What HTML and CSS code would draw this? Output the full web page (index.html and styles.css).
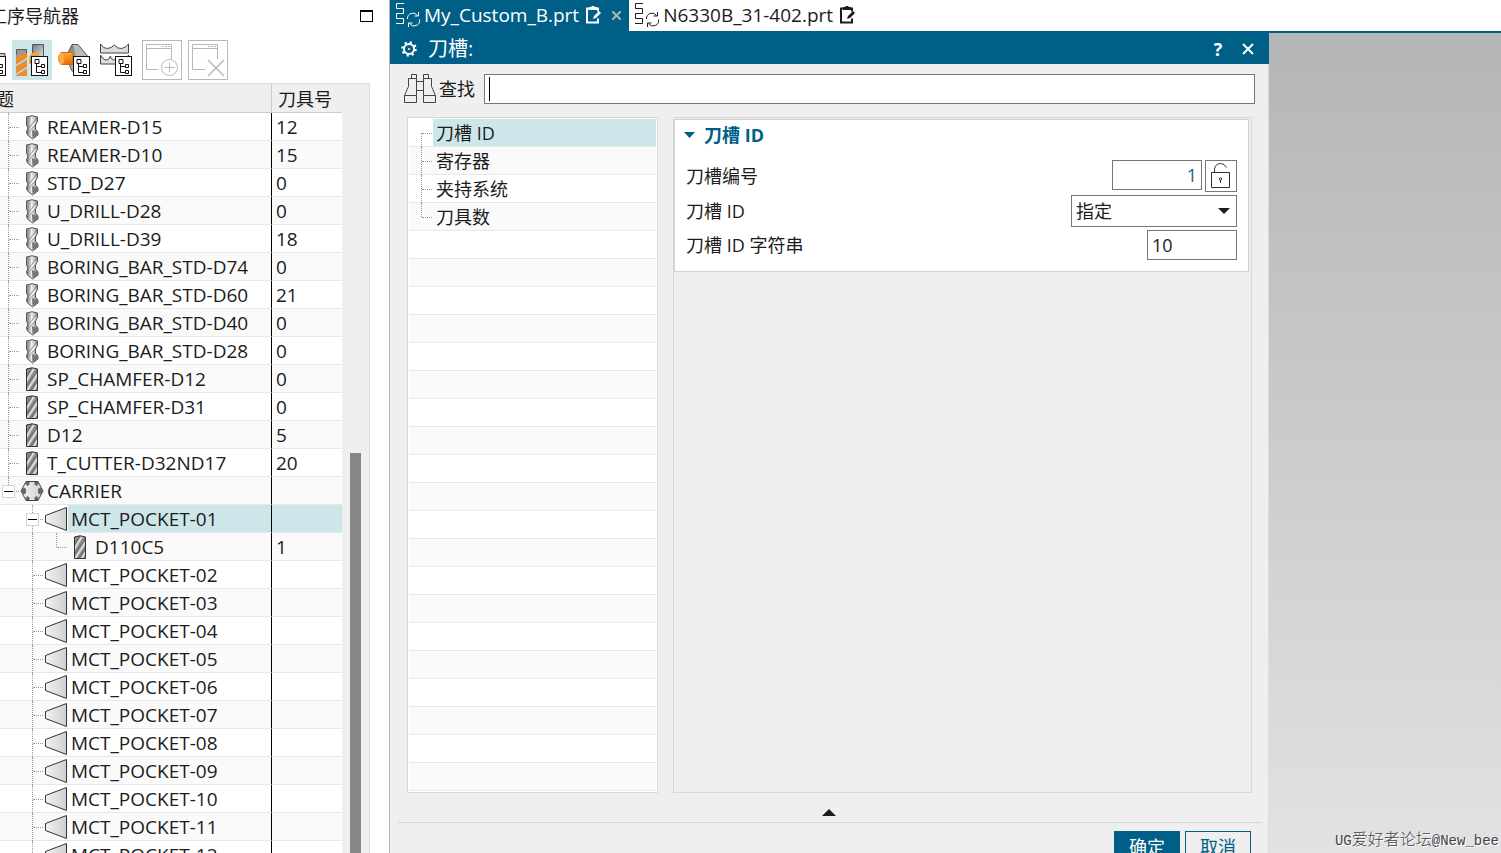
FILE: index.html
```html
<!DOCTYPE html>
<html lang="zh-CN">
<head>
<meta charset="utf-8">
<title>工序导航器</title>
<link rel="stylesheet" href="styles.css">
</head>
<body>
<svg class="defs" aria-hidden="true">
  <defs>
    <linearGradient id="metal" x1="0" x2="1"><stop offset="0" stop-color="#777"/><stop offset=".45" stop-color="#eee"/><stop offset="1" stop-color="#888"/></linearGradient>
    <linearGradient id="pale" x1="0" x2="1"><stop offset="0" stop-color="#f2f2f2"/><stop offset="1" stop-color="#cfcfcf"/></linearGradient>
    <linearGradient id="steel" x1="0" x2="1" y2="1"><stop offset="0" stop-color="#777"/><stop offset="1" stop-color="#ddd"/></linearGradient>
    <linearGradient id="orange" y2="1" x2="0"><stop offset="0" stop-color="#ffa838"/><stop offset="1" stop-color="#e06a00"/></linearGradient>
    <clipPath id="millclip"><rect x="7" y="3" width="10" height="22"/></clipPath>
    <clipPath id="toolclip"><rect x="4" y="10" width="11" height="26"/></clipPath>
  </defs>
  <symbol id="drill" viewBox="0 0 24 28">
    <path d="M6.500 4 Q12 1.500 17.500 4 V8 L15.500 12 V16 L18 19 V22 L12.500 26 L7.500 22 L6.500 19 L8 15 L6.500 12 Z" fill="url(#metal)" stroke="#555"/>
    <path d="M17 5 C15 10 9 12 7.500 20 C11 16 15 14 17 8 Z" fill="#f4f4f4" stroke="#666" stroke-width=".8"/>
    <path d="M12 17 l5.500 2 v3 l-5 3.500 z" fill="#777"/>
    <path d="M7 5 h3 l-2 8 z" fill="#999"/>
  </symbol>
  <symbol id="mill" viewBox="0 0 24 28">
    <g clip-path="url(#millclip)"><rect x="6" y="2" width="12" height="24" fill="#8c8c8c"/>
    <path d="M5 18 L15 2 M6 27 L19 7 M12 28 L19 17" stroke="#dedede" stroke-width="2"/><path d="M4 16 L13 1 M5 24 L19 3 M9 28 L19 13" stroke="#666" stroke-width="1"/></g>
    <path d="M6.500 4 Q12 1.500 17.500 4 V25.500 H6.500 Z" fill="none" stroke="#333"/>
  </symbol>
  <symbol id="carrier" viewBox="0 0 24 28">
    <path d="M6 4.500 H18 L23 14 L18 23.500 H6 L1 14 Z" fill="url(#pale)" stroke="#444"/>
    <g fill="#666"><path d="M5.500 5h4v2.500l-2 1.500-2-2zM14.500 5h4v2l-2 2-2-1.500zM2 12.500l2-2 2 1.500v4l-2 1.500-2-2zM22 12.500l-2-2-2 1.500v4l2 1.500 2-2zM5.500 23h4v-2.500l-2-1.500-2 2zM14.500 23h4v-2l-2-2-2 1.500z"/></g>
  </symbol>
  <symbol id="pocket" viewBox="0 0 24 28">
    <path d="M1.500 10.500 L22.500 2.500 V25.500 L1.500 17.500 Z" fill="url(#pale)" stroke="#333"/>
  </symbol>
  <symbol id="badge" viewBox="0 0 18 20">
    <rect x=".5" y=".5" width="16" height="19" fill="#fff" stroke="#111"/>
    <path d="M4 3.500h4v4H4zM10.500 8.500h3v3h-3zM10.500 14.500h3v3h-3zM5.500 8v8.500h5M5.500 10.500h5" fill="none" stroke="#111"/>
  </symbol>
  <symbol id="part" viewBox="0 0 26 26">
    <path d="M9 1.500H1.500v5h7v5h-7v5h7v5H1" fill="none" stroke="currentColor"/>
    <path d="M12.500 17a5.500 5.500 0 0 1 10-3.500M24.500 17.500a5.500 5.500 0 0 1-10 4M23.500 10v4h-4M13.500 25v-4h4" fill="none" stroke="currentColor"/>
  </symbol>
  <symbol id="clip" viewBox="0 0 17 20">
    <path d="M11 3.500h2v3M4 3.500H2v14h11v-4" fill="none" stroke="currentColor" stroke-width="2"/>
    <path d="M4 2h2l1-1h2l1 1h2v3H4zM9 11l5-5 2 2-5 5-3 1z" fill="currentColor"/>
  </symbol>
</svg>

<main class="app">
  <section class="navigator">
    <header class="nav-head"><h1>工序导航器</h1><button class="maximize" aria-label="最大化"></button></header>
    <div class="toolbar">
      <button class="tool tool-cut" aria-label="程序顺序视图"><svg width="8" height="40" viewBox="32 0 8 40"><path d="M26 13.500h11v4" fill="#ccc" stroke="#444"/><use href="#badge" x="21" y="16" width="18" height="20"/></svg></button>
      <button class="tool tool-on" aria-label="机床视图"><svg width="40" height="40" viewBox="0 0 40 40">
        <g clip-path="url(#toolclip)"><rect x="4" y="10" width="11" height="26" fill="#999"/><path d="M2 22l15-9M2 31l15-9M2 40l15-9" stroke="#f58b1b" stroke-width="5"/><path d="M2 26.500l15-9M2 35.500l15-9" stroke="#ccc" stroke-width="2"/></g><path d="M4.500 9.500h10v4M4.500 9.500v5" fill="none" stroke="#555"/>
        <path d="M20.500 4.500h11v12h-11z" fill="url(#steel)" stroke="#555"/><path d="M17.500 24v-8l3-3h6v5z" fill="url(#orange)"/><use href="#badge" x="19" y="16" width="18" height="20"/></svg></button>
      <button class="tool" aria-label="几何视图"><svg width="40" height="40" viewBox="0 0 40 40">
        <path d="M12 17l6-12.500h6L36 19l-12 14-6-2z" fill="url(#steel)" stroke="#555"/><path d="M24 5l9 12-9 4-5-16z" fill="#bbb"/><path d="M7 12.500h12v12H7q-5-6 0-12z" fill="url(#orange)" stroke="#d86a00"/><ellipse cx="7.500" cy="18.500" rx="3" ry="6" fill="#ffa64a"/><use href="#badge" x="19" y="16" width="18" height="20"/></svg></button>
      <button class="tool" aria-label="加工方法视图"><svg width="40" height="40" viewBox="0 0 40 40">
        <path d="M4.500 4v9h28V4q-3 4-7 4.500t-7-3.500q-3 3-7 3.500t-7-4.500zM4.500 15v9h28V15q-3 6-6 5t-4-4q-2 5-5 4t-3-4q-2 5-5 4t-5-5z" fill="#ddd" stroke="#444"/><use href="#badge" x="19" y="16" width="18" height="20"/></svg></button>
      <button class="tool tool-frame" aria-label="创建"><svg width="38" height="38" viewBox="0 0 38 38" fill="none" stroke="#b8b8b8"><path d="M15 28.500H3.500v-25h25V18M3.500 7.500h25"/><path d="M19 5.500h8" stroke-dasharray="2 1"/><circle cx="26.500" cy="26.500" r="8"/><path d="M26.500 21.500v10M21.500 26.500h10"/></svg></button>
      <button class="tool tool-frame" aria-label="删除"><svg width="38" height="38" viewBox="0 0 38 38" fill="none" stroke="#b8b8b8"><path d="M16 28.500H3.500v-25h25V18M3.500 7.500h25"/><path d="M19 5.500h8" stroke-dasharray="2 1"/><path d="M19 19l16 16M35 19L19 35" stroke-width="1.500"/></svg></button>
    </div>
    <div class="tree-box">
      <table class="tree">
        <thead><tr><th>题</th><th>刀具号</th></tr></thead>
        <tbody>
          <tr><td><div class="node"><i class="g tee"></i><svg class="ic"><use href="#drill"/></svg><span>REAMER-D15</span></div></td><td>12</td></tr>
          <tr><td><div class="node"><i class="g tee"></i><svg class="ic"><use href="#drill"/></svg><span>REAMER-D10</span></div></td><td>15</td></tr>
          <tr><td><div class="node"><i class="g tee"></i><svg class="ic"><use href="#drill"/></svg><span>STD_D27</span></div></td><td>0</td></tr>
          <tr><td><div class="node"><i class="g tee"></i><svg class="ic"><use href="#drill"/></svg><span>U_DRILL-D28</span></div></td><td>0</td></tr>
          <tr><td><div class="node"><i class="g tee"></i><svg class="ic"><use href="#drill"/></svg><span>U_DRILL-D39</span></div></td><td>18</td></tr>
          <tr><td><div class="node"><i class="g tee"></i><svg class="ic"><use href="#drill"/></svg><span>BORING_BAR_STD-D74</span></div></td><td>0</td></tr>
          <tr><td><div class="node"><i class="g tee"></i><svg class="ic"><use href="#drill"/></svg><span>BORING_BAR_STD-D60</span></div></td><td>21</td></tr>
          <tr><td><div class="node"><i class="g tee"></i><svg class="ic"><use href="#drill"/></svg><span>BORING_BAR_STD-D40</span></div></td><td>0</td></tr>
          <tr><td><div class="node"><i class="g tee"></i><svg class="ic"><use href="#drill"/></svg><span>BORING_BAR_STD-D28</span></div></td><td>0</td></tr>
          <tr><td><div class="node"><i class="g tee"></i><svg class="ic"><use href="#mill"/></svg><span>SP_CHAMFER-D12</span></div></td><td>0</td></tr>
          <tr><td><div class="node"><i class="g tee"></i><svg class="ic"><use href="#mill"/></svg><span>SP_CHAMFER-D31</span></div></td><td>0</td></tr>
          <tr><td><div class="node"><i class="g tee"></i><svg class="ic"><use href="#mill"/></svg><span>D12</span></div></td><td>5</td></tr>
          <tr><td><div class="node"><i class="g tee"></i><svg class="ic"><use href="#mill"/></svg><span>T_CUTTER-D32ND17</span></div></td><td>20</td></tr>
          <tr><td><div class="node"><i class="g elbow"><button class="toggle" aria-label="折叠"></button></i><svg class="ic"><use href="#carrier"/></svg><span>CARRIER</span></div></td><td></td></tr>
          <tr class="selected"><td><div class="node"><i class="pad"></i><i class="g tee"><button class="toggle" aria-label="折叠"></button></i><svg class="ic"><use href="#pocket"/></svg><span>MCT_POCKET-01</span></div></td><td></td></tr>
          <tr><td><div class="node"><i class="pad"></i><i class="pad g"></i><i class="g elbow"></i><svg class="ic"><use href="#mill"/></svg><span>D110C5</span></div></td><td>1</td></tr>
          <tr><td><div class="node"><i class="pad"></i><i class="g tee"></i><svg class="ic"><use href="#pocket"/></svg><span>MCT_POCKET-02</span></div></td><td></td></tr>
          <tr><td><div class="node"><i class="pad"></i><i class="g tee"></i><svg class="ic"><use href="#pocket"/></svg><span>MCT_POCKET-03</span></div></td><td></td></tr>
          <tr><td><div class="node"><i class="pad"></i><i class="g tee"></i><svg class="ic"><use href="#pocket"/></svg><span>MCT_POCKET-04</span></div></td><td></td></tr>
          <tr><td><div class="node"><i class="pad"></i><i class="g tee"></i><svg class="ic"><use href="#pocket"/></svg><span>MCT_POCKET-05</span></div></td><td></td></tr>
          <tr><td><div class="node"><i class="pad"></i><i class="g tee"></i><svg class="ic"><use href="#pocket"/></svg><span>MCT_POCKET-06</span></div></td><td></td></tr>
          <tr><td><div class="node"><i class="pad"></i><i class="g tee"></i><svg class="ic"><use href="#pocket"/></svg><span>MCT_POCKET-07</span></div></td><td></td></tr>
          <tr><td><div class="node"><i class="pad"></i><i class="g tee"></i><svg class="ic"><use href="#pocket"/></svg><span>MCT_POCKET-08</span></div></td><td></td></tr>
          <tr><td><div class="node"><i class="pad"></i><i class="g tee"></i><svg class="ic"><use href="#pocket"/></svg><span>MCT_POCKET-09</span></div></td><td></td></tr>
          <tr><td><div class="node"><i class="pad"></i><i class="g tee"></i><svg class="ic"><use href="#pocket"/></svg><span>MCT_POCKET-10</span></div></td><td></td></tr>
          <tr><td><div class="node"><i class="pad"></i><i class="g tee"></i><svg class="ic"><use href="#pocket"/></svg><span>MCT_POCKET-11</span></div></td><td></td></tr>
          <tr><td><div class="node"><i class="pad"></i><i class="g tee"></i><svg class="ic"><use href="#pocket"/></svg><span>MCT_POCKET-12</span></div></td><td></td></tr>
        </tbody>
      </table>
      <div class="scrollbar"><div class="thumb"></div></div>
    </div>
  </section>

  <section class="work">
    <nav class="tabs">
      <div class="tab tab-active"><svg class="part"><use href="#part"/></svg><span>My_Custom_B.prt</span><svg class="clip"><use href="#clip"/></svg><button class="tab-close" aria-label="关闭"><svg width="9" height="9" viewBox="0 0 9 9"><path d="M0 0l9 9M9 0L0 9" stroke="#b4b4b4" stroke-width="2"/></svg></button></div>
      <div class="tab"><svg class="part"><use href="#part"/></svg><span>N6330B_31-402.prt</span><svg class="clip"><use href="#clip"/></svg></div>
    </nav>
    <div class="stage">
      <section class="dialog">
        <header class="title">
          <svg width="16" height="16" viewBox="0 0 16 16" fill="none" stroke="#fff"><circle cx="8" cy="8" r="5" stroke-width="2"/><circle cx="8" cy="8" r="6.500" stroke-width="2.500" stroke-dasharray="2.100 3"/><circle cx="8" cy="8" r="1" fill="#fff" stroke="none"/></svg>
          <h2>刀槽:</h2>
          <button class="help" aria-label="帮助">?</button>
          <button class="close" aria-label="关闭"><svg width="12" height="12" viewBox="0 0 12 12"><path d="M1 1l10 10M11 1L1 11" stroke="#fff" stroke-width="2"/></svg></button>
        </header>
        <div class="search">
          <svg width="32" height="30" viewBox="0 0 32 30" fill="none" stroke="#444"><path d="M.5 21.500h12v7H.5zM19.500 21.500h12v7h-12zM.5 21.500l4-9v-8h8v17M31.500 21.500l-4-9v-8h-8v17M7.500 4.500v-4h5v4M19.500 4.500v-4h5v4M12.500 7.500h7M12.500 16.500h7"/></svg>
          <label for="find">查找</label>
          <div class="find-box"><input id="find" type="text"><i class="caret"></i></div>
        </div>
        <div class="panes">
          <ul class="list">
            <li class="on"><i class="g tee first"></i><span>刀槽 ID</span></li>
            <li><i class="g tee"></i><span>寄存器</span></li>
            <li><i class="g tee"></i><span>夹持系统</span></li>
            <li><i class="g elbow"></i><span>刀具数</span></li>
            <li></li><li></li><li></li><li></li><li></li><li></li><li></li><li></li><li></li><li></li>
            <li></li><li></li><li></li><li></li><li></li><li></li><li></li><li></li><li></li><li></li>
          </ul>
          <div class="detail">
            <section class="card">
              <h3><svg width="11" height="6" viewBox="0 0 11 6"><path d="M0 0h11L5.500 6z" fill="#005f87"/></svg>刀槽 ID</h3>
              <div class="field"><label for="no">刀槽编号</label><input id="no" class="num" type="text" value="1"><button class="lock" aria-label="解锁"><svg width="20" height="26" viewBox="0 0 20 26" fill="none" stroke="#333"><path d="M.5 9.500h18v15H.5zM3.500 9.500V6q1-5.500 6-5.500 4 0 6 4"/><circle cx="9.500" cy="16" r="1.200"/><path d="M9.500 17v3"/></svg></button></div>
              <div class="field"><label for="kind">刀槽 ID</label><div class="select"><select id="kind"><option>指定</option></select><svg width="12" height="6" viewBox="0 0 12 6"><path d="M0 0h12L6 6z" fill="#1c1c1c"/></svg></div></div>
              <div class="field"><label for="str">刀槽 ID 字符串</label><input id="str" class="text" type="text" value="10"></div>
            </section>
          </div>
        </div>
        <button class="collapse" aria-label="收起"><svg width="14" height="7" viewBox="0 0 14 7"><path d="M0 7h14L7 0z" fill="#1c1c1c"/></svg></button>
        <footer class="actions"><button class="ok">确定</button><button class="cancel">取消</button></footer>
      </section>
      <div class="canvas"><p class="mark"><span>UG</span>爱好者论坛<span>@New_bee</span></p></div>
    </div>
  </section>
</main>
</body>
</html>
```
FILE: styles.css
```css
* { box-sizing: border-box; }
body {
  margin: 0;
  color: #1c1c1c;
  background: #fff;
  font-family: "Open Sans", "Noto Sans CJK SC", sans-serif;
  font-size: 18px;
  line-height: 24px;
}
button, input, select { font: inherit; color: inherit; margin: 0; padding: 0; border: 0; background: none; border-radius: 0; outline: 0; }
h1, h2, h3, p, ul { margin: 0; padding: 0; font-weight: 400; font-size: 18px; }
ul { list-style: none; }
svg { flex: none; display: block; }
.defs { position: absolute; width: 0; height: 0; }

.app { display: grid; grid-template-columns: 390px 1fr; height: 100vh; overflow: hidden; }

/* navigator */
.navigator { display: flex; flex-direction: column; min-height: 0; overflow: hidden; border-right: 1px solid #b4b4b4; }
.nav-head { display: flex; justify-content: space-between; align-items: center; height: 32px; padding-right: 16px; }
.nav-head h1 { margin-left: -11px; }
.maximize { width: 13px; height: 12px; border: 1px solid #000; border-top-width: 2px; }
.toolbar { display: flex; align-items: center; height: 51px; padding: 5px 0 0; gap: 2px; }
.tool { display: block; flex: none; width: 40px; height: 40px; }
.tool-cut { width: 8px; margin-right: 2px; }
.tool-on { background: #cde6ea; }
.tool-frame { margin-left: 4px; border: 1px solid #b8b8b8; }
.tree-box { display: flex; flex: 1; min-height: 0; width: 370px; border: 1px solid #dcdcdc; border-left: 0; border-bottom: 0; background: #efefef; }
.tree { width: 342px; table-layout: fixed; border-collapse: separate; border-spacing: 0; height: max-content; }
.tree th { height: 29px; padding: 2px 0 0 6px; text-align: left; font-weight: 400; background: #efefef; border-bottom: 1px solid #ccc; }
.tree th:first-child { width: 272px; padding: 2px 0 0; border-right: 1px solid #ccc; text-indent: -4px; }
.tree td { height: 28px; padding: 0 0 0 4px; border-bottom: 1px solid #e8e8e8; background: #fff; font-size: 19px; }
.tree td:first-child { padding: 0; border-right: 1px solid #000; }
.tree tbody tr:nth-child(even) td { background: #fafafa; }
.tree tbody .selected td:last-child { background: #cde6ea; }
.node { display: flex; height: 27px; }
.node span { flex: 1; padding-left: 3px; line-height: 28px; white-space: nowrap; }
.selected .node span { height: 27px; background: #cde6ea; }
.ic { width: 24px; height: 28px; }
.pad { flex: none; width: 24px; }

/* dotted guides */
.g { position: relative; flex: none; width: 20px; }
.g.pad { width: 24px; }
.g::before { content: ""; position: absolute; left: 8px; top: 0; bottom: -1px; border-left: 1px dotted #999; }
.g.tee::after, .g.elbow::after { content: ""; position: absolute; left: 9px; right: 1px; top: 14px; border-top: 1px dotted #999; }
.g.elbow::before { bottom: 13px; }
.g.first::before { top: 14px; }
.toggle { position: absolute; z-index: 1; left: 2px; top: 8px; width: 13px; height: 13px; border: 1px solid #d4d4d4; background: linear-gradient(#000, #000) center / 9px 1px no-repeat #fff; }

.scrollbar { flex: 1; display: grid; grid-template-rows: 369fr 400fr; padding: 0 8px; }
.thumb { grid-row: 2; background: #868686; }

/* part tabs */
.work { display: flex; flex-direction: column; min-width: 0; min-height: 0; }
.tabs { display: flex; flex: none; gap: 5px; height: 33px; border-bottom: 2px solid #005f87; font-size: 19px; }
.tab { display: flex; align-items: center; white-space: nowrap; padding-bottom: 1px; }
.tab-active { color: #fff; background: #005f87; padding: 0 8px 1px 5px; }
.part { width: 26px; height: 26px; margin-right: 3px; }
.clip { width: 17px; height: 20px; margin-left: 6px; }
.tab-close { margin-left: 10px; }

/* dialog */
.stage { flex: 1; display: grid; grid-template-columns: 879fr 232fr; grid-template-rows: minmax(0, 1fr); min-height: 0; }
.dialog { display: flex; flex-direction: column; min-width: 0; background: #efefef; border-right: 1px solid #dcdcdc; }
.dialog > * { flex: none; }
.title { display: flex; align-items: center; height: 31px; margin-right: -1px; padding: 0 15px 0 11px; background: #005f87; color: #fff; }
.title h2 { flex: 1; margin-left: 11px; font-size: 20px; }
.help { width: 12px; font-weight: 700; }
.close { margin-left: 18px; }
.search { display: flex; align-items: center; padding: 10px 13px 0 14px; }
.search label { margin: 0 9px 0 3px; }
.find-box { position: relative; flex: 1; }
.find-box input { display: block; width: 100%; height: 30px; padding: 0 4px; background: #fff; border: 1px solid #777; }
.caret { position: absolute; left: 5px; top: 3px; width: 1px; height: 24px; background: #000; }
.panes { display: grid; grid-template-columns: 251fr 579fr; gap: 15px; margin: 13px 16px 0 17px; }
.list { padding: 1px; background: #fff; border: 1px solid #d8d8d8; }
.list li { display: flex; height: 28px; border-bottom: 1px solid #e8e8e8; padding-left: 4px; }
.list li:nth-child(even) { background: #fafafa; }
.list span { flex: 1; height: 27px; padding-left: 3px; line-height: 29px; }
.list .on span { background: #cde6ea; }
.detail { padding: 1px 2px 0 0; border: 1px solid #d8d8d8; }
.card { padding: 0 11px 11px; background: #fff; border: 1px solid #d0d0d0; }
.card h3 { display: flex; align-items: center; gap: 9px; height: 30px; margin-left: -2px; font-weight: 700; color: #005f87; }
.field { display: flex; align-items: center; height: 32px; margin-bottom: 3px; }
.card h3 + .field { margin-top: 10px; }
.field:last-child { height: 30px; margin: 0; }
.field label { flex: 1; }
.field input { height: 30px; width: 90px; padding: 0 4px; background: #fff; border: 1px solid #777; }
.field .num { align-self: flex-start; text-align: right; color: #1f5f82; }
.lock { display: grid; place-items: center; width: 32px; height: 32px; margin-left: 3px; border: 1px solid #777; }
.select { position: relative; width: 166px; }
.select select { display: block; appearance: none; width: 100%; height: 32px; padding: 0 4px; background: #fff; border: 1px solid #777; }
.select svg { position: absolute; right: 7px; top: 13px; pointer-events: none; }
.collapse { align-self: center; margin: 16px 0 6px; }
.actions { display: flex; justify-content: flex-end; gap: 5px; margin: 0 7px 0 8px; padding: 8px 10px 0 0; border-top: 1px solid #d4d4d4; }
.actions button { width: 66px; height: 32px; border: 1px solid #005f87; color: #005f87; }
.actions .ok { color: #fff; background: #005f87; }

/* graphics window */
.canvas { display: flex; align-items: flex-end; justify-content: flex-end; background: linear-gradient(#b4b5b6, #e1e2e4); }
.mark { padding: 0 2px 2px 0; font-size: 16px; line-height: 20px; color: #444; text-shadow: 1px 1px 0 #fff; white-space: nowrap; font-family: "Noto Sans CJK SC", sans-serif; font-weight: 300; }
.mark span { font-family: "Liberation Mono", monospace; font-size: 14px; }
```
